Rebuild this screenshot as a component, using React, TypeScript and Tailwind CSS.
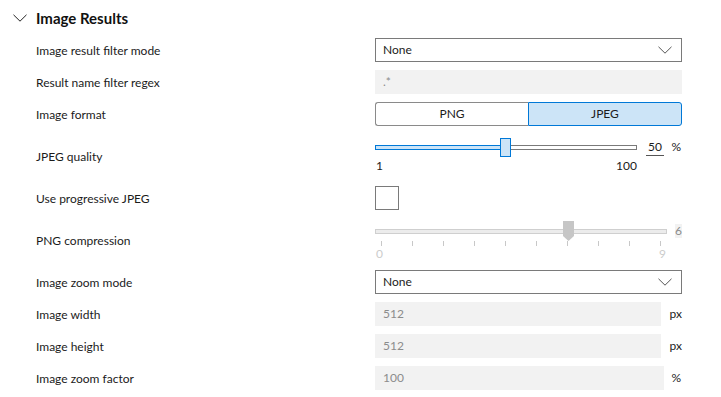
const font = { fontFamily: 'Lato, "Noto Sans", sans-serif' };

function Chevron({ className }: { className?: string }) {
  return (
    <svg className={className} width="14" height="8" viewBox="0 0 14 8">
      <path d="M0.5 0.8L7 7.2L13.5 0.8" fill="none" stroke="currentColor" strokeWidth="1" />
    </svg>
  );
}

function Row({ label, tall, children }: { label: string; tall?: boolean; children: React.ReactNode }) {
  return (
    <div className={`flex items-center ${tall ? "h-11" : "h-6"}`}>
      <div className="w-[375px] pl-9 pt-[1px] text-[12px] text-[#1b1b1b]">{label}</div>
      <div className="w-[307px]">{children}</div>
    </div>
  );
}

function Select({ value }: { value: string }) {
  return (
    <div className="flex h-6 items-center justify-between border border-[#7a7a7a] bg-white pl-[7px] pr-[9px] text-[12px] text-[#1b1b1b]">
      <span>{value}</span>
      <Chevron className="text-[#555]" />
    </div>
  );
}

function Field({ value, width }: { value: string; width: string }) {
  return (
    <div className={`flex h-6 items-center bg-[#f2f2f2] pl-[8px] text-[12px] text-[#8c8c8c] ${width}`}>
      {value}
    </div>
  );
}

export default function App() {
  const ticks = Array.from({ length: 10 }, (_, i) => i);
  return (
    <div className="h-[397px] w-[721px] bg-white pt-2" style={font}>
      <div className="flex h-5 items-center">
        <Chevron className="ml-[13px] text-[#222]" />
        <span className="ml-[9px] text-[15px] font-bold text-[#111]">Image Results</span>
      </div>

      <div className="mt-2.5 flex flex-col gap-2">
        <Row label="Image result filter mode">
          <Select value="None" />
        </Row>

        <Row label="Result name filter regex">
          <Field value=".*" width="w-full" />
        </Row>

        <Row label="Image format">
          <div className="flex h-6 text-[12px] text-[#1b1b1b]">
            <div className="flex flex-1 items-center justify-center rounded-l-[3px] border border-r-0 border-[#8a8a8a]">PNG</div>
            <div className="flex flex-1 items-center justify-center rounded-r-[3px] border border-[#0078d7] bg-[#cce4f7]">JPEG</div>
          </div>
        </Row>

        <Row label="JPEG quality" tall>
          <div className="flex h-11 items-start pt-1">
            <div className="w-[262px]">
              <div className="relative h-5">
                <div className="absolute left-0 right-0 top-[7px] flex h-[5px]">
                  <div className="w-[126px] border border-r-0 border-[#0078d7] bg-[#cce4f7]" />
                  <div className="flex-1 border border-l-0 border-[#7a7a7a] bg-white" />
                </div>
                <div className="absolute left-[125px] top-0 h-[19px] w-[11px] border border-[#0078d7] bg-[#cce4f7]" />
              </div>
              <div className="flex justify-between text-[12px] leading-[16px] text-[#1b1b1b]">
                <span className="pl-[1px]">1</span>
                <span>100</span>
              </div>
            </div>
            <div className="ml-[9px] mt-[1px] w-[18px] border-b border-[#555] text-center text-[12px] leading-[16px] text-[#1b1b1b]">50</div>
            <div className="ml-auto mr-[1px] mt-[1px] text-[12px] leading-[16px] text-[#1b1b1b]">%</div>
          </div>
        </Row>

        <Row label="Use progressive JPEG">
          <div className="h-6 w-6 border border-[#7a7a7a] bg-white" />
        </Row>

        <Row label="PNG compression" tall>
          <div className="flex h-11 items-start pt-[3px]">
            <div className="w-[292px]">
              <div className="relative h-5">
                <div className="absolute left-0 right-0 top-[8px] h-[5px] border border-[#cfcfcf] bg-[#ececec]" />
                <svg className="absolute left-[188px] top-0" width="11" height="20" viewBox="0 0 11 20">
                  <path d="M0 0H11V15L5.5 20L0 15Z" fill="#c6c6c6" />
                </svg>
              </div>
              <div className="flex h-[6px] justify-between px-[6px]">
                {ticks.map((t) => (
                  <div key={t} className="h-[5px] w-px bg-[#c8c8c8]" />
                ))}
              </div>
              <div className="flex justify-between pl-[1px] text-[12px] leading-[14px] text-[#cccccc]">
                <span>0</span>
                <span className="pr-[1px]">9</span>
              </div>
            </div>
            <div className="ml-auto mt-[3px] flex h-[14px] w-[7px] items-center justify-center bg-[#f2f2f2] text-[12px] text-[#8c8c8c]">6</div>
          </div>
        </Row>

        <Row label="Image zoom mode">
          <Select value="None" />
        </Row>

        <Row label="Image width">
          <div className="flex items-center">
            <Field value="512" width="w-[286px]" />
            <span className="ml-auto text-[12px] text-[#1b1b1b]">px</span>
          </div>
        </Row>

        <Row label="Image height">
          <div className="flex items-center">
            <Field value="512" width="w-[286px]" />
            <span className="ml-auto text-[12px] text-[#1b1b1b]">px</span>
          </div>
        </Row>

        <Row label="Image zoom factor">
          <div className="flex items-center">
            <Field value="100" width="w-[289px]" />
            <span className="ml-auto mr-[1px] text-[12px] text-[#1b1b1b]">%</span>
          </div>
        </Row>
      </div>
    </div>
  );
}
